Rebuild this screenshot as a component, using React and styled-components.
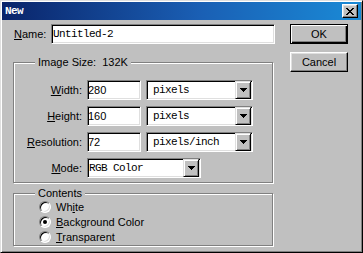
import React from 'react';
import styled, { createGlobalStyle } from 'styled-components';

const GlobalStyle = createGlobalStyle`
  html, body {
    margin: 0;
    padding: 0;
    background: #c0c0c0;
  }
  body {
    font-family: "Liberation Sans", Arial, sans-serif;
    font-size: 11px;
    color: #000;
  }
`;

const App = () => {
  return (
    <>
      <GlobalStyle />
      <Window>
        <TitleBar>
          <Title>New</Title>
          <CloseButton aria-label="Close">
            <svg width="8" height="7" viewBox="0 0 8 7" shapeRendering="crispEdges">
              <path d="M0 0h2v1h1v1h2v-1h1v-1h2v1h-1v1h-1v1h-1v1h1v1h1v1h1v1h-2v-1h-1v-1h-2v1h-1v1h-2v-1h1v-1h1v-1h1v-1h-1v-1h-1v-1h-1z" fill="#000" />
            </svg>
          </CloseButton>
        </TitleBar>

        <Body>
          <LeftColumn>
            <NameRow>
              <NameLabel><U>N</U>ame:</NameLabel>
              <Field $mono $width={224} $pad={1}>Untitled-2</Field>
            </NameRow>

            <Group>
              <Legend>Image Size:&nbsp;&nbsp;132K</Legend>
              <SizeGrid>
                <FieldLabel><U>W</U>idth:</FieldLabel>
                <Field $width={54}>280</Field>
                <Select $width={107} $pad={6}>pixels</Select>

                <FieldLabel><U>H</U>eight:</FieldLabel>
                <Field $width={54}>160</Field>
                <Select $width={107} $pad={6}>pixels</Select>

                <FieldLabel><U>R</U>esolution:</FieldLabel>
                <Field $width={54}>72</Field>
                <Select $width={107} $pad={6}>pixels/inch</Select>

                <FieldLabel><U>M</U>ode:</FieldLabel>
                <Select $width={114} $pad={1} $span>RGB Color</Select>
              </SizeGrid>
            </Group>

            <ContentsGroup>
              <Legend>Contents</Legend>
              <RadioList>
                <RadioRow><Radio /><span>Wh<U>i</U>te</span></RadioRow>
                <RadioRow><Radio $checked /><span><U>B</U>ackground Color</span></RadioRow>
                <RadioRow><Radio /><span><U>T</U>ransparent</span></RadioRow>
              </RadioList>
            </ContentsGroup>
          </LeftColumn>

          <ButtonColumn>
            <Button $default>OK</Button>
            <Button>Cancel</Button>
          </ButtonColumn>
        </Body>
      </Window>
    </>
  );
};

const Select = ({ children, $width, $pad, $span }) => (
  <SelectBox $width={$width} $span={$span}>
    <SelectValue $pad={$pad}>{children}</SelectValue>
    <DropButton>
      <svg width="7" height="4" viewBox="0 0 7 4" shapeRendering="crispEdges">
        <path d="M0 0h7v1h-1v1h-1v1h-1v1h-1v-1h-1v-1h-1v-1h-1z" fill="#000" />
      </svg>
    </DropButton>
  </SelectBox>
);

export default App;


const Window = styled.div`
  box-sizing: border-box;
  width: 363px;
  height: 253px;
  padding: 1px;
  background: #c0c0c0;
  border: 1px solid;
  border-color: #dfdfdf #000 #000 #dfdfdf;
  box-shadow: inset 1px 1px 0 #fff, inset -1px -1px 0 #808080;
  display: flex;
  flex-direction: column;
  overflow: hidden;
`;

const TitleBar = styled.div`
  height: 18px;
  flex: none;
  display: flex;
  align-items: center;
  justify-content: space-between;
  padding: 0 3px;
  background: linear-gradient(to right, #0a246a 0%, #1a5fb4 55%, #1a8ad6 100%);
`;

const Title = styled.span`
  font-family: "Liberation Mono", "Courier New", monospace;
  font-weight: bold;
  font-size: 11px;
  letter-spacing: -0.6px;
  color: #fff;
`;

const CloseButton = styled.div`
  box-sizing: border-box;
  width: 16px;
  height: 14px;
  display: flex;
  align-items: center;
  justify-content: center;
  background: #c0c0c0;
  border: 1px solid;
  border-color: #fff #000 #000 #fff;
  box-shadow: inset -1px -1px 0 #808080, inset 1px 1px 0 #dfdfdf;
`;

const Body = styled.div`
  display: flex;
  gap: 15px;
  padding: 4px 0 0 11px;
`;

const LeftColumn = styled.div`
  width: 262px;
  display: flex;
  flex-direction: column;
`;

const NameRow = styled.div`
  display: flex;
  align-items: center;
  height: 20px;
`;

const NameLabel = styled.span`
  width: 37px;
  padding-left: 1px;
`;

const U = styled.span`
  text-decoration: underline;
  text-underline-offset: 1px;
`;

const Field = styled.div`
  box-sizing: border-box;
  width: ${p => p.$width}px;
  height: 20px;
  display: flex;
  align-items: center;
  padding-left: ${p => p.$pad || 0}px;
  background: #fff;
  border: 1px solid;
  border-color: #808080 #fff #fff #808080;
  box-shadow: inset 1px 1px 0 #000, inset -1px -1px 0 #dfdfdf;
  font-family: ${p => (p.$mono ? '"Liberation Mono", "Courier New", monospace' : '"Liberation Sans", Arial, sans-serif')};
  font-size: 11px;
  letter-spacing: ${p => (p.$mono ? '-0.6px' : '0')};
  white-space: nowrap;
`;

const Group = styled.div`
  position: relative;
  box-sizing: border-box;
  width: 260px;
  margin-top: 18px;
  padding: 17px 0 4px;
  border: 1px solid #808080;
  box-shadow: inset 1px 1px 0 #fff, 1px 1px 0 #fff;
`;

const ContentsGroup = styled(Group)`
  margin-top: 10px;
  padding: 5px 0 1px 25px;
`;

const Legend = styled.span`
  position: absolute;
  top: -7px;
  left: 21px;
  padding: 0 3px;
  line-height: 13px;
  background: #c0c0c0;
  white-space: nowrap;
`;

const SizeGrid = styled.div`
  display: grid;
  grid-template-columns: 68px 54px 107px;
  grid-auto-rows: 20px;
  column-gap: 5px;
  row-gap: 6px;
  align-items: center;
`;

const FieldLabel = styled.span`
  text-align: right;
`;

const SelectBox = styled.div`
  box-sizing: border-box;
  width: ${p => p.$width}px;
  height: 20px;
  grid-column: ${p => (p.$span ? '2 / span 2' : 'auto')};
  display: flex;
  align-items: stretch;
  background: #fff;
  border: 1px solid;
  border-color: #808080 #fff #fff #808080;
  box-shadow: inset 1px 1px 0 #000, inset -1px -1px 0 #dfdfdf;
`;

const SelectValue = styled.div`
  flex: 1;
  display: flex;
  align-items: center;
  padding-left: ${p => p.$pad}px;
  font-family: "Liberation Mono", "Courier New", monospace;
  font-size: 11px;
  letter-spacing: -0.6px;
  white-space: nowrap;
  overflow: hidden;
`;

const DropButton = styled.div`
  box-sizing: border-box;
  width: 16px;
  margin-right: 1px;
  display: flex;
  align-items: center;
  justify-content: center;
  background: #c0c0c0;
  border: 1px solid;
  border-color: #dfdfdf #000 #000 #dfdfdf;
  box-shadow: inset 1px 1px 0 #fff, inset -1px -1px 0 #808080;
`;

const RadioList = styled.div`
  display: flex;
  flex-direction: column;
`;

const RadioRow = styled.div`
  height: 15px;
  display: flex;
  align-items: center;
  gap: 5px;
`;

const Radio = styled.span`
  position: relative;
  box-sizing: border-box;
  width: 12px;
  height: 12px;
  border-radius: 50%;
  background: #fff;
  border: 1px solid;
  border-color: #808080 #fff #fff #808080;
  box-shadow: inset 1px 1px 0 #000, inset -1px -1px 0 #dfdfdf;

  &::after {
    content: "";
    display: ${p => (p.$checked ? 'block' : 'none')};
    position: absolute;
    left: 3px;
    top: 3px;
    width: 4px;
    height: 4px;
    border-radius: 50%;
    background: #000;
  }
`;

const ButtonColumn = styled.div`
  display: flex;
  flex-direction: column;
  gap: 8px;
`;

const Button = styled.div`
  box-sizing: border-box;
  width: 58px;
  height: 20px;
  display: flex;
  align-items: center;
  justify-content: center;
  font-size: 11px;
  background: #c0c0c0;
  border: 1px solid;
  border-color: ${p => (p.$default ? '#000' : '#fff #000 #000 #fff')};
  box-shadow: ${p => (p.$default
    ? 'inset 1px 1px 0 #fff, inset -1px -1px 0 #000, inset -2px -2px 0 #808080'
    : 'inset -1px -1px 0 #808080, inset 1px 1px 0 #dfdfdf')};
`;
